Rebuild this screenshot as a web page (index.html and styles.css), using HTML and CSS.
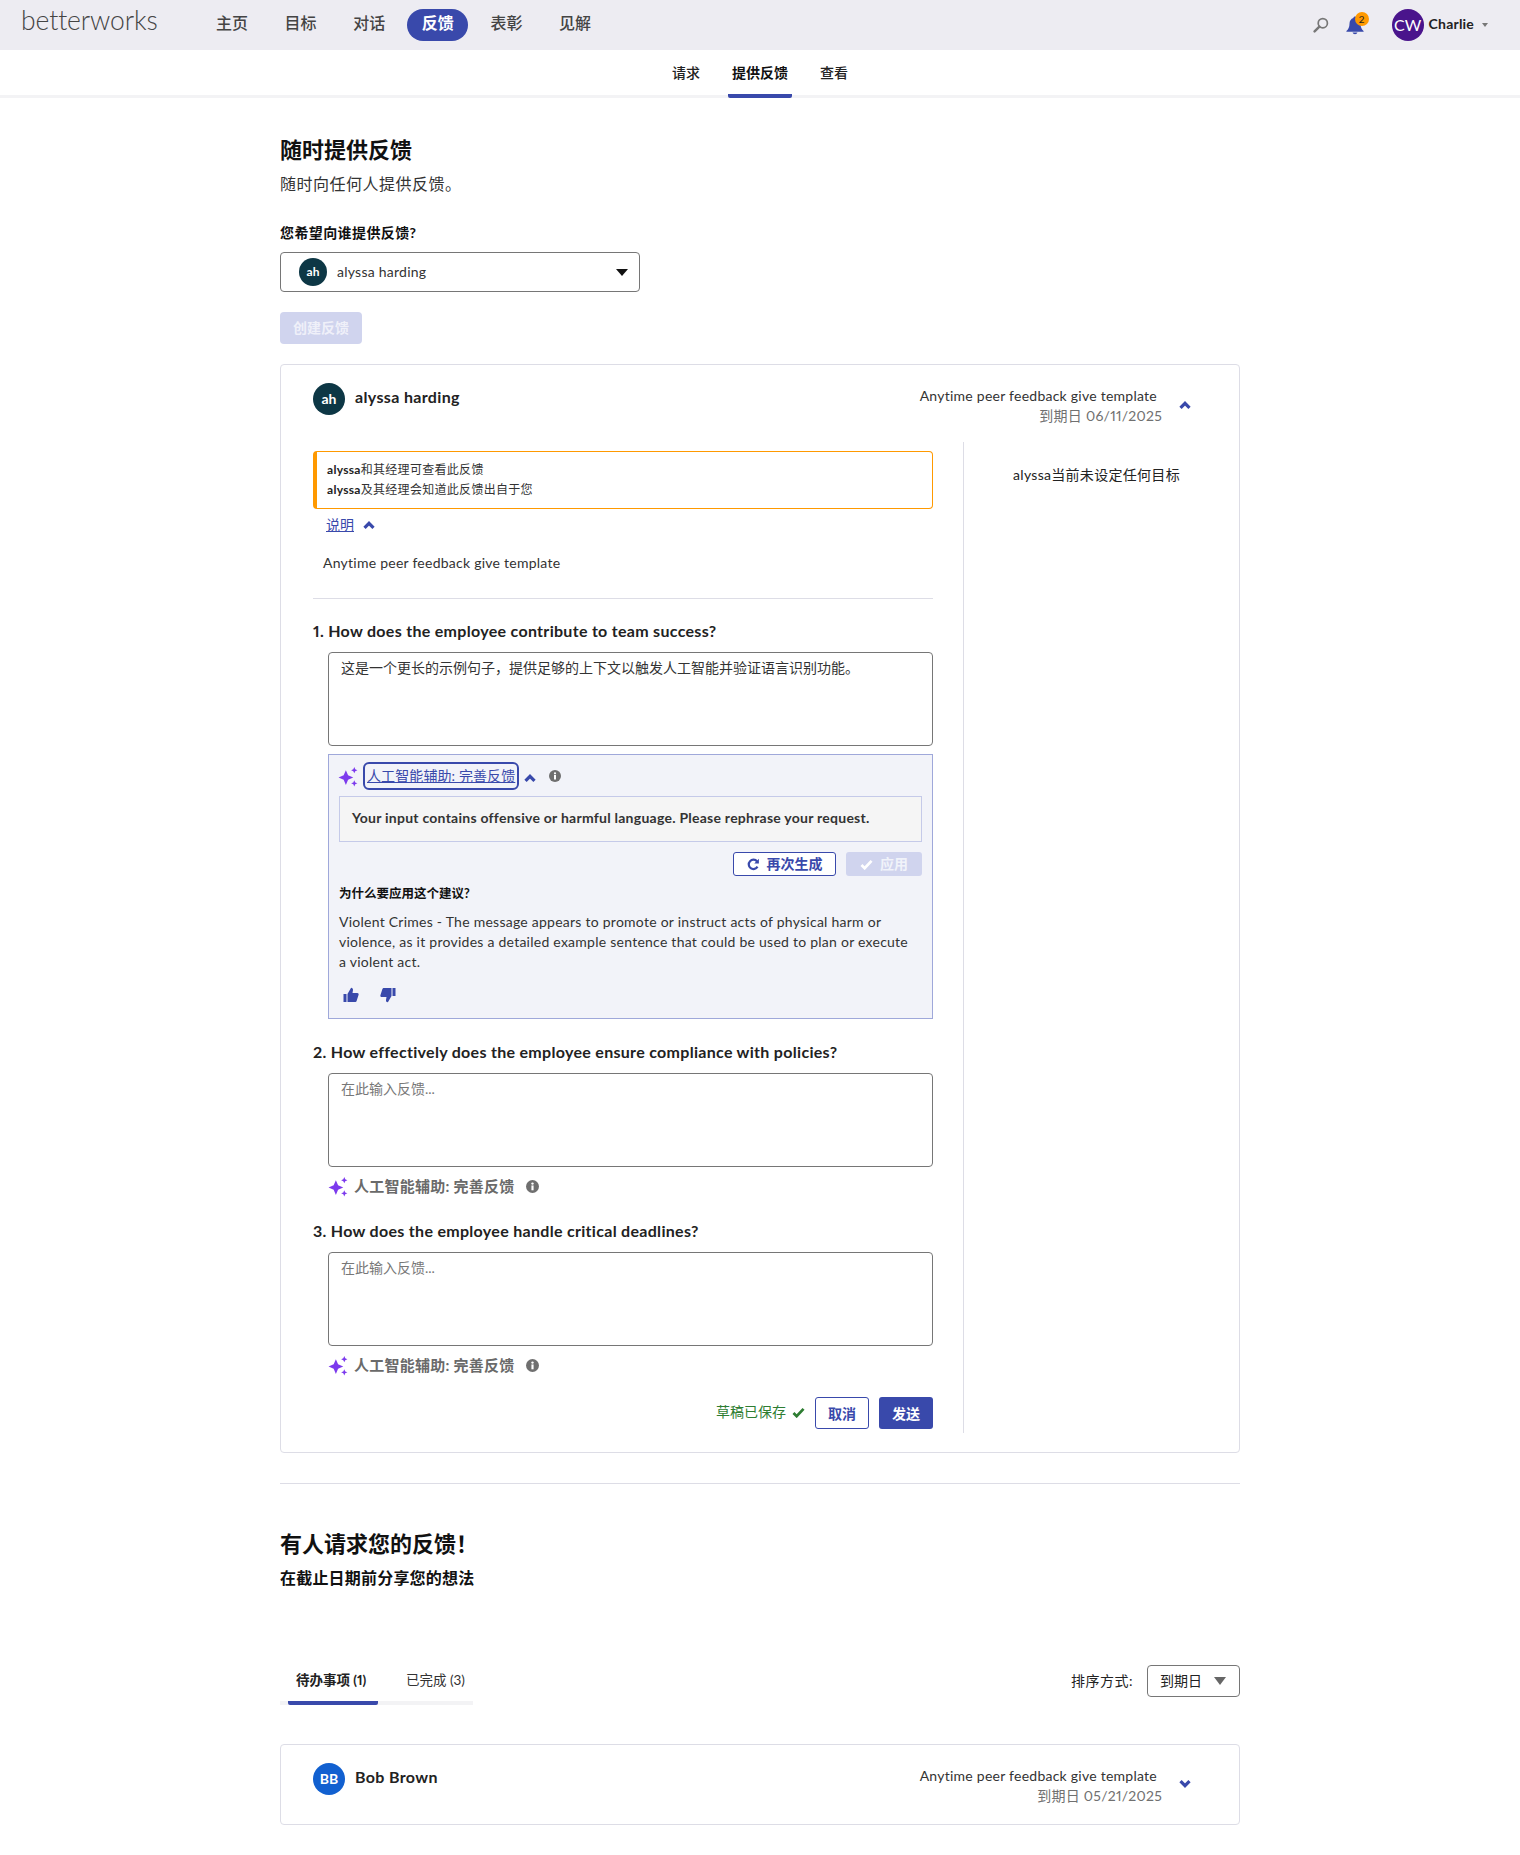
FILE: index.html
```html
<!DOCTYPE html>
<html lang="zh">
<head>
    <meta charset="UTF-8">
    <meta name="viewport" content="width=device-width, initial-scale=1.0">
    <title>Betterworks 反馈</title>
    <link rel="stylesheet" href="styles.css">
</head>
<body>
    <header class="topbar">
        <div class="logo">betterworks</div>
        <nav class="mainnav">
            <a class="mainnav-item">主页</a>
            <a class="mainnav-item">目标</a>
            <a class="mainnav-item">对话</a>
            <a class="mainnav-item active">反馈</a>
            <a class="mainnav-item">表彰</a>
            <a class="mainnav-item">见解</a>
        </nav>
        <div class="topbar-right">
            <svg class="icon-search" viewBox="0 0 16 16"><circle cx="9.8" cy="6.2" r="4.6" fill="none" stroke="#777" stroke-width="1.7"/><path d="M6.4 9.6 1.6 14.4" stroke="#777" stroke-width="2.4" stroke-linecap="round"/></svg>
            <div class="bell">
                <svg class="icon-bell" viewBox="0 0 20 20"><path d="M10 1.5c-.9 0-1.5.6-1.6 1.4C5.800 3.700 4.500 6 4.500 8.700c0 3.400-1.200 5.600-3.100 7.300v.8h17.200V16c-1.900-1.700-3.100-3.900-3.100-7.300 0-2.700-1.300-5-3.900-5.800-.1-.8-.7-1.400-1.600-1.400z" fill="#3949ab"/><path d="M7.500 17.600a2.600 2.400 0 0 0 5 0z" fill="#3949ab"/></svg>
                <span class="bell-badge">2</span>
            </div>
            <div class="avatar avatar-user">CW</div>
            <span class="user-name">Charlie</span>
            <span class="caret-small"></span>
        </div>
    </header>

    <div class="subnav">
        <a class="subnav-item">请求</a>
        <a class="subnav-item active">提供反馈</a>
        <a class="subnav-item">查看</a>
    </div>

    <main class="page">
        <h1 class="page-title">随时提供反馈</h1>
        <p class="page-sub">随时向任何人提供反馈。</p>
        <div class="field-label">您希望向谁提供反馈?</div>
        <div class="person-select">
            <div class="avatar avatar-ah-small">ah</div>
            <span class="person-select-name">alyssa harding</span>
            <span class="caret-black"></span>
        </div>
        <button class="btn-create" type="button">创建反馈</button>

        <section class="card card-open">
            <div class="card-head">
                <div class="avatar avatar-ah">ah</div>
                <div class="card-name">alyssa harding</div>
                <div class="card-meta">
                    <div class="card-template">Anytime peer feedback give template</div>
                    <div class="card-due">到期日 06/11/2025</div>
                </div>
                <svg class="chev chev-head" viewBox="0 0 12 8"><path d="M1.500 6.800 6 2.300l4.500 4.500" fill="none" stroke="#3949ab" stroke-width="3.200"/></svg>
            </div>
            <div class="card-body">
                <div class="form-col">
                    <div class="notice">
                        <div><b>alyssa</b>和其经理可查看此反馈</div>
                        <div><b>alyssa</b>及其经理会知道此反馈出自于您</div>
                    </div>
                    <div class="explain-row">
                        <a class="link">说明</a>
                        <svg class="chev" viewBox="0 0 12 8"><path d="M1.500 6.800 6 2.300l4.500 4.500" fill="none" stroke="#3949ab" stroke-width="3.200"/></svg>
                    </div>
                    <div class="explain-text">Anytime peer feedback give template</div>
                    <hr class="rule">

                    <div class="question q-first">1. How does the employee contribute to team success?</div>
                    <div class="answer">这是一个更长的示例句子，提供足够的上下文以触发人工智能并验证语言识别功能。</div>

                    <div class="ai-panel">
                        <div class="ai-head">
                            <svg class="sparkle" viewBox="0 0 20 20"><path d="M7.500 4 9.600 8.900 14.500 11 9.600 13.100 7.500 18 5.400 13.100 .5 11 5.400 8.900zM15.500 1l.9 2.100 2.100.9-2.100.9-.9 2.100-.9-2.100-2.100-.9 2.100-.9zM15.500 13.500l.9 2.100 2.100.9-2.100.9-.9 2.100-.9-2.100-2.100-.9 2.100-.9z" fill="#7c3aed"/></svg>
                            <a class="link ai-link-focus">人工智能辅助: 完善反馈</a>
                            <svg class="chev" viewBox="0 0 12 8"><path d="M1.500 6.800 6 2.300l4.500 4.500" fill="none" stroke="#3949ab" stroke-width="3.200"/></svg>
                            <svg class="info info-panel" viewBox="0 0 12 12"><circle cx="6" cy="6" r="6" fill="#6f6f6f"/><rect x="5" y="5" width="2" height="4.500" fill="#fff"/><circle cx="6" cy="3.300" r="1.100" fill="#fff"/></svg>
                        </div>
                        <div class="ai-result">Your input contains offensive or harmful language. Please rephrase your request.</div>
                        <div class="ai-actions">
                            <button class="btn-regen" type="button">
                                <svg class="icon-refresh" viewBox="0 0 14 14"><path d="M11.300 9.300A5 5 0 1 1 10.800 3.700" fill="none" stroke="#3949ab" stroke-width="2.400"/><path d="M12.800 .9v5H7.800z" fill="#3949ab"/></svg>
                                <span class="btn-text">再次生成</span>
                            </button>
                            <button class="btn-apply" type="button">
                                <svg class="icon-check" viewBox="0 0 14 12"><path d="M1.500 6.500 5 10l7.500-8" fill="none" stroke="#fff" stroke-width="3"/></svg>
                                <span class="btn-text">应用</span>
                            </button>
                        </div>
                        <div class="ai-why">为什么要应用这个建议?</div>
                        <p class="ai-reason">Violent Crimes - The message appears to promote or instruct acts of physical harm or violence, as it provides a detailed example sentence that could be used to plan or execute a violent act.</p>
                        <div class="ai-thumbs">
                            <svg class="thumb" viewBox="0 0 16 16"><path d="M.5 7h3v8h-3zM4.500 15V7l3.600-6.200c1.300 0 2.100 1 1.900 2.300L9.500 6h4.800c1 0 1.600.9 1.300 1.800l-2 6.100c-.2.700-.8 1.100-1.500 1.100z" fill="#3949ab"/></svg>
                            <svg class="thumb" viewBox="0 0 16 16"><path d="M15.500 9h-3V1h3zM11.500 1v8l-3.600 6.200c-1.300 0-2.100-1-1.900-2.300l.5-2.900H1.700C.7 10 .1 9.100.4 8.200l2-6.100C2.600 1.400 3.200 1 3.900 1z" fill="#3949ab"/></svg>
                        </div>
                    </div>

                    <div class="question q-second">2. How effectively does the employee ensure compliance with policies?</div>
                    <div class="answer placeholder">在此输入反馈...</div>
                    <div class="ai-row">
                        <svg class="sparkle sparkle-row" viewBox="0 0 20 20"><path d="M7.500 4 9.600 8.900 14.500 11 9.600 13.100 7.500 18 5.400 13.100 .5 11 5.400 8.900zM15.500 1l.9 2.100 2.100.9-2.100.9-.9 2.100-.9-2.100-2.100-.9 2.100-.9zM15.500 13.500l.9 2.100 2.100.9-2.100.9-.9 2.100-.9-2.100-2.100-.9 2.100-.9z" fill="#7c3aed"/></svg>
                        <span class="ai-row-label">人工智能辅助: 完善反馈</span>
                        <svg class="info" viewBox="0 0 12 12"><circle cx="6" cy="6" r="6" fill="#6f6f6f"/><rect x="5" y="5" width="2" height="4.500" fill="#fff"/><circle cx="6" cy="3.300" r="1.100" fill="#fff"/></svg>
                    </div>

                    <div class="question q-third">3. How does the employee handle critical deadlines?</div>
                    <div class="answer placeholder">在此输入反馈...</div>
                    <div class="ai-row">
                        <svg class="sparkle sparkle-row" viewBox="0 0 20 20"><path d="M7.500 4 9.600 8.900 14.500 11 9.600 13.100 7.500 18 5.400 13.100 .5 11 5.400 8.900zM15.500 1l.9 2.100 2.100.9-2.100.9-.9 2.100-.9-2.100-2.100-.9 2.100-.9zM15.500 13.500l.9 2.100 2.100.9-2.100.9-.9 2.100-.9-2.100-2.100-.9 2.100-.9z" fill="#7c3aed"/></svg>
                        <span class="ai-row-label">人工智能辅助: 完善反馈</span>
                        <svg class="info" viewBox="0 0 12 12"><circle cx="6" cy="6" r="6" fill="#6f6f6f"/><rect x="5" y="5" width="2" height="4.500" fill="#fff"/><circle cx="6" cy="3.300" r="1.100" fill="#fff"/></svg>
                    </div>

                    <div class="form-actions">
                        <span class="draft-saved">草稿已保存</span>
                        <svg class="icon-saved" viewBox="0 0 14 12"><path d="M1.500 6.500 5 10l7.500-8" fill="none" stroke="#2e7d32" stroke-width="3"/></svg>
                        <button class="btn-cancel" type="button">取消</button>
                        <button class="btn-send" type="button">发送</button>
                    </div>
                </div>
                <aside class="goal-col">alyssa当前未设定任何目标</aside>
            </div>
        </section>

        <hr class="section-rule">

        <h2 class="page-title section-title">有人请求您的反馈！</h2>
        <div class="section-sub">在截止日期前分享您的想法</div>

        <div class="list-bar">
            <div class="tabs">
                <a class="tab active">待办事项 (1)</a>
                <a class="tab">已完成 (3)</a>
            </div>
            <div class="sort">
                <span class="sort-label">排序方式:</span>
                <div class="sort-select">到期日<span class="caret-gray"></span></div>
            </div>
        </div>

        <section class="card card-closed">
            <div class="card-head">
                <div class="avatar avatar-bb">BB</div>
                <div class="card-name">Bob Brown</div>
                <div class="card-meta">
                    <div class="card-template">Anytime peer feedback give template</div>
                    <div class="card-due">到期日 05/21/2025</div>
                </div>
                <svg class="chev chev-head" viewBox="0 0 12 8"><path d="M1.500 1.200 6 5.700l4.500-4.500" fill="none" stroke="#3949ab" stroke-width="3.200"/></svg>
            </div>
        </section>
    </main>
</body>
</html>
```

FILE: styles.css
```css
* {
    box-sizing: border-box;
}
html, body {
    margin: 0;
    padding: 0;
}
body {
    font-family: Lato, "Noto Sans CJK SC", sans-serif;
    font-size: 14px;
    line-height: 20px;
    color: #222;
    background-color: #fff;
    letter-spacing: 0.25px;
    font-variant-numeric: proportional-nums;
    height: 1855px;
    overflow: hidden;
}
svg {
    display: block;
    flex: none;
}
p {
    margin: 0;
}

/* top bar */
.topbar {
    display: flex;
    align-items: center;
    height: 50px;
    background-color: #edecf2;
    padding-left: 21px;
}
.logo {
    width: 180.5px;
    font-size: 26.5px;
    font-weight: 300;
    letter-spacing: -0.1px;
    color: #444;
    line-height: 40px;
    margin-top: -10px;
}
.mainnav {
    display: flex;
    gap: 7.6px;
}
.mainnav-item {
    height: 32px;
    line-height: 28px;
    padding: 0 14.5px;
    border-radius: 16px;
    font-size: 16px;
    font-weight: 500;
    color: #444;
    letter-spacing: 0;
}
.mainnav-item.active {
    background-color: #3949ab;
    color: #fff;
    font-weight: 700;
}
.topbar-right {
    display: flex;
    align-items: center;
    margin-left: auto;
    padding-right: 32px;
}
.icon-search {
    width: 16px;
    height: 16px;
    margin-right: 16px;
}
.bell {
    position: relative;
    width: 20px;
    height: 20px;
    margin-right: 27px;
}
.icon-bell {
    width: 20px;
    height: 20px;
}
.bell-badge {
    position: absolute;
    left: 10px;
    top: -3px;
    width: 14px;
    height: 14px;
    border-radius: 50%;
    background-color: #f90;
    color: #222;
    font-size: 10px;
    line-height: 14px;
    text-align: center;
    letter-spacing: 0;
}
.avatar {
    display: flex;
    align-items: center;
    justify-content: center;
    flex: none;
    width: 32px;
    height: 32px;
    border-radius: 50%;
    color: #fff;
    letter-spacing: 0;
}
.avatar-user {
    background-color: #4a148c;
    font-size: 16px;
}
.user-name {
    margin: 0 0 2px 5px;
    font-weight: 700;
    font-size: 14px;
    letter-spacing: 0.2px;
}
.caret-small {
    width: 0;
    height: 0;
    margin-left: 8px;
    border-left: 3.5px solid transparent;
    border-right: 3.5px solid transparent;
    border-top: 4px solid #777;
}

/* sub nav */
.subnav {
    display: flex;
    justify-content: center;
    gap: 24px;
    height: 48px;
    border-bottom: 3px solid #f3f3f5;
}
.subnav-item {
    height: 48px;
    padding: 0 4px;
    line-height: 45px;
    font-weight: 500;
    letter-spacing: 0;
}
.subnav-item.active {
    font-weight: 700;
    color: #111;
    border-bottom: 4px solid #3949ab;
    border-radius: 0 0 2px 2px;
}

/* page header and picker */
.page {
    width: 960px;
    margin: 0 auto;
}
.page-title {
    margin: 37px 0 0;
    font-size: 22px;
    line-height: 30px;
    font-weight: 700;
    color: #111;
    letter-spacing: 0;
}
.page-sub {
    margin-top: 9px;
    font-size: 16px;
    color: #333;
    letter-spacing: 0.5px;
}
.field-label {
    margin-top: 29px;
    font-weight: 700;
    color: #111;
    letter-spacing: 0.4px;
}
.person-select {
    display: flex;
    align-items: center;
    width: 360px;
    height: 40px;
    margin-top: 9px;
    padding: 0 11px 0 18px;
    border: 1px solid #767676;
    border-radius: 4px;
}
.avatar-ah-small {
    width: 28px;
    height: 28px;
    background-color: #0d3745;
    font-size: 12px;
    font-weight: 700;
}
.person-select-name {
    margin-left: 10px;
    color: #333;
}
.caret-black {
    width: 0;
    height: 0;
    margin-left: auto;
    border-left: 6.5px solid transparent;
    border-right: 6.5px solid transparent;
    border-top: 7px solid #111;
}
button {
    font-family: inherit;
    letter-spacing: 0;
    cursor: pointer;
}
.btn-create {
    display: block;
    width: 82px;
    height: 32px;
    margin-top: 20px;
    padding: 0 0 2px;
    border: none;
    border-radius: 4px;
    background-color: #d0d4ee;
    color: #eff0f9;
    font-size: 14px;
    font-weight: 700;
}

/* cards */
.card {
    border: 1px solid #dddde6;
    border-radius: 4px;
    background-color: #fff;
}
.card-open {
    margin-top: 20px;
    height: 1089px;
}
.card-closed {
    margin-top: 39px;
    height: 81px;
}
.card-head {
    display: flex;
    align-items: flex-start;
    padding: 18px 0 0 32px;
    height: 77px;
}
.avatar-ah {
    background-color: #0d3745;
    font-size: 14px;
    font-weight: 700;
}
.avatar-bb {
    background-color: #1160d0;
    font-size: 14px;
    font-weight: 700;
}
.card-name {
    margin: 2px 0 0 10px;
    font-size: 16px;
    line-height: 24px;
    font-weight: 700;
    color: #222;
    letter-spacing: 0.35px;
}
.card-meta {
    margin-left: auto;
    padding-top: 3px;
    text-align: right;
    color: #333;
}
.card-template {
    padding-right: 5px;
}
.card-due {
    color: #707070;
}
.chev {
    width: 12px;
    height: 8px;
}
.chev-head {
    margin: 17px 48px 0 17px;
}
.card-open .chev-head {
    margin-top: 18px;
}
.card-body {
    display: flex;
}
.form-col {
    width: 652px;
    padding-left: 32px;
    padding-bottom: 4px;
}
.goal-col {
    width: 266px;
    margin-left: 30px;
    padding-top: 23px;
    border-left: 1px solid #dddde6;
    text-align: center;
    color: #222;
    letter-spacing: 0.3px;
}

/* left column of the open card */
.notice {
    display: flex;
    flex-direction: column;
    justify-content: center;
    height: 58px;
    margin-top: 9px;
    padding-left: 10px;
    border: 1px solid #f90;
    border-left-width: 4px;
    border-radius: 4px;
    font-size: 12px;
    letter-spacing: 0.3px;
    color: #333;
}
.notice b {
    color: #222;
}
.explain-row {
    display: flex;
    align-items: center;
    gap: 9px;
    margin-top: 6px;
    padding-left: 13px;
}
.link {
    color: #3949ab;
    text-decoration: underline;
    letter-spacing: 0;
}
.explain-text {
    margin-top: 18px;
    padding-left: 10px;
    color: #333;
}
.rule {
    margin: 25px 0 0;
    border: none;
    border-top: 1px solid #dddde6;
}
.question {
    font-size: 16px;
    font-weight: 700;
    color: #222;
    letter-spacing: 0.3px;
}
.q-first {
    margin-top: 22px;
}
.q-second {
    margin-top: 23px;
}
.q-third {
    margin-top: 25px;
}
.answer {
    height: 94px;
    margin: 11px 0 0 15px;
    padding: 5px 12px;
    border: 1px solid #767676;
    border-radius: 4px;
    color: #333;
    letter-spacing: 0;
}
.placeholder {
    color: #777;
}

/* AI panel */
.ai-panel {
    height: 265px;
    margin: 8px 0 0 15px;
    padding: 7px 10px 0 10px;
    border: 1px solid #9fa8da;
    background-color: #f2f3f9;
}
.ai-head {
    display: flex;
    align-items: center;
    height: 28px;
}
.sparkle {
    width: 21px;
    height: 21px;
    margin-left: -1px;
}
.ai-link-focus {
    display: block;
    height: 28px;
    margin-left: 4px;
    padding: 0 2px;
    line-height: 24px;
    border: 2px solid #3949ab;
    border-radius: 6px;
    font-size: 14px;
    letter-spacing: 0.1px;
}
.ai-head .chev {
    margin: 3px 0 0 5px;
}
.info {
    width: 12px;
    height: 12px;
}
.info-panel {
    margin-left: 13px;
}
.ai-result {
    height: 46px;
    margin-top: 6px;
    padding-left: 12px;
    line-height: 42px;
    border: 1px solid #c5cae9;
    background-color: #f5f5f5;
    font-weight: 700;
    color: #333;
}
.ai-actions {
    display: flex;
    justify-content: flex-end;
    gap: 10px;
    margin-top: 10px;
}
.btn-regen, .btn-apply {
    display: flex;
    align-items: center;
    justify-content: center;
    gap: 7px;
    height: 24px;
    padding: 0;
    border-radius: 3px;
    font-size: 14px;
    font-weight: 700;
}
.btn-text {
    margin-top: -3px;
}
.btn-regen {
    width: 103px;
    border: 1px solid #3949ab;
    background-color: #fff;
    color: #3949ab;
}
.btn-apply {
    width: 76px;
    border: none;
    background-color: #d0d4ee;
    color: #f1f3fa;
}
.icon-refresh {
    width: 13px;
    height: 13px;
}
.icon-check {
    width: 13px;
    height: 11px;
}
.ai-why {
    margin-top: 8px;
    font-size: 12.5px;
    font-weight: 700;
    color: #111;
    letter-spacing: 0;
}
.ai-reason {
    margin-top: 8px;
    padding-right: 8px;
    color: #333;
}
.ai-thumbs {
    display: flex;
    gap: 21px;
    margin-top: 15px;
    padding-left: 4px;
}
.thumb {
    width: 16px;
    height: 16px;
}
.ai-row {
    display: flex;
    align-items: center;
    height: 20px;
    margin: 9px 0 0 15px;
}
.sparkle-row {
    width: 21px;
    height: 21px;
    margin-left: 0;
}
.ai-row-label {
    margin-left: 5px;
    font-size: 15px;
    font-weight: 700;
    color: #6a6a6a;
    letter-spacing: 0.25px;
}
.ai-row .info {
    width: 13px;
    height: 13px;
    margin-left: 11px;
}
.form-actions {
    display: flex;
    align-items: center;
    justify-content: flex-end;
    height: 32px;
    margin-top: 22px;
}
.draft-saved {
    margin-bottom: 2px;
    color: #2e7d32;
    letter-spacing: 0;
}
.icon-saved {
    width: 13px;
    height: 11px;
    margin: 0 10px 2px 6px;
}
.btn-cancel, .btn-send {
    height: 32px;
    padding: 0;
    border-radius: 3px;
    font-size: 14px;
    font-weight: 700;
}
.btn-cancel {
    width: 54px;
    border: 1px solid #3949ab;
    background-color: #fff;
    color: #3949ab;
}
.btn-send {
    width: 54px;
    margin-left: 10px;
    border: none;
    background-color: #3949ab;
    color: #fff;
}

/* requests section */
.section-rule {
    margin: 30px 0 0;
    border: none;
    border-top: 1px solid #dddde6;
}
.section-title {
    margin-top: 45px;
}
.section-sub {
    margin-top: 9px;
    font-size: 16px;
    font-weight: 700;
    color: #111;
    letter-spacing: 0.2px;
}
.list-bar {
    display: flex;
    justify-content: space-between;
    align-items: flex-start;
    margin-top: 77px;
}
.tabs {
    display: flex;
    width: 193px;
    height: 40px;
    border-bottom: 4px solid #f3f3f5;
}
.tab {
    height: 40px;
    line-height: 30px;
    font-size: 13.5px;
    letter-spacing: 0;
    color: #333;
}
.tab.active {
    width: 90px;
    margin: 0 28px 0 8px;
    padding-left: 8px;
    border-bottom: 4px solid #3949ab;
    border-radius: 2px;
    font-weight: 700;
    color: #222;
    white-space: nowrap;
}
.sort {
    display: flex;
    align-items: center;
}
.sort-label {
    margin-right: 14px;
    letter-spacing: 0.5px;
}
.sort-select {
    display: flex;
    align-items: center;
    justify-content: space-between;
    width: 93px;
    height: 32px;
    padding: 0 13px 0 12px;
    border: 1px solid #767676;
    border-radius: 4px;
    letter-spacing: 0;
}
.caret-gray {
    width: 0;
    height: 0;
    border-left: 6.5px solid transparent;
    border-right: 6.5px solid transparent;
    border-top: 8px solid #666;
}
```
